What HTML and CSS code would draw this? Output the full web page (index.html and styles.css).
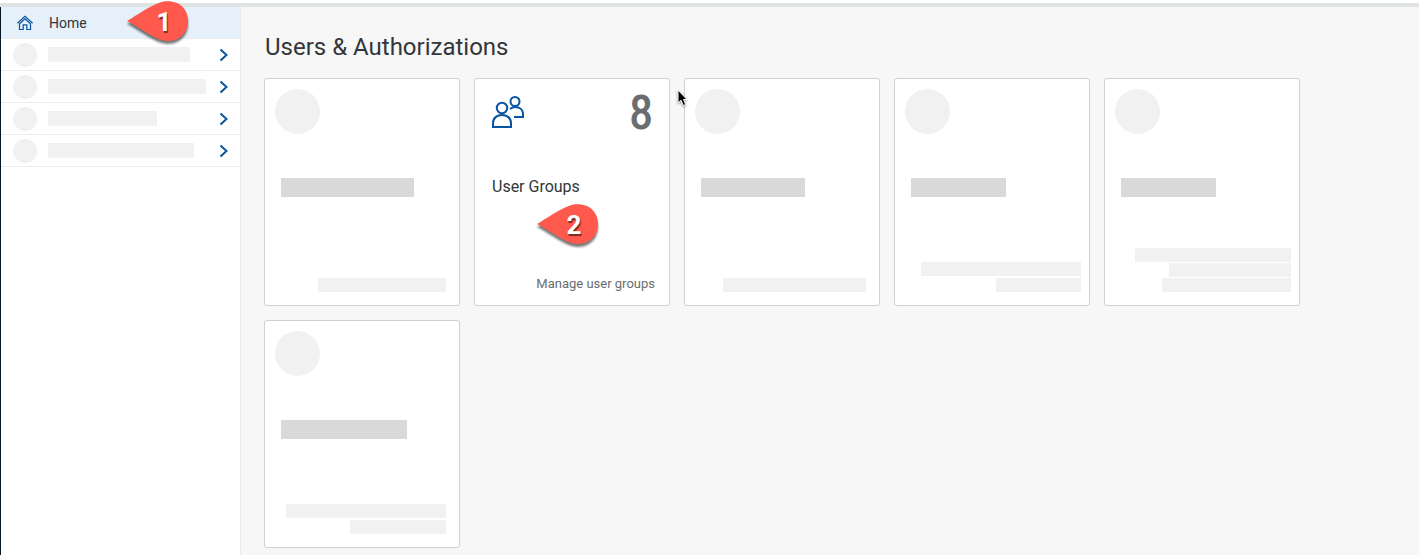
FILE: index.html
```html
<!DOCTYPE html>
<html lang="en">
<head>
<meta charset="utf-8">
<meta name="viewport" content="width=device-width, initial-scale=1">
<title>Users &amp; Authorizations</title>
<link rel="stylesheet" href="styles.css">
</head>
<body>
<svg class="defs" width="0" height="0" aria-hidden="true">
  <symbol id="chevron" viewBox="0 0 10 14"><path d="M1.5 1.5 7.5 7l-6 5.5" fill="none" stroke="#0854a0" stroke-width="2"/></symbol>
  <symbol id="pin" viewBox="0 0 70 50"><path d="M2 21C12 15 25 6 35 2.500C39 1 46 .5 52 3C59 6 63 13 63 21C63 29 59 36 52 39C46 42 39 41 35 39.500C25 36 12 26 2 21Z" fill="#ff594d"/></symbol>
</svg>
<header class="topbar"></header>
<div class="shell">
  <nav class="sidebar" aria-label="Main">
    <a class="row row-home" href="#">
      <svg class="home-icon" viewBox="0 0 16 16" aria-hidden="true"><g fill="none" stroke="#0854a0" stroke-width="1.2"><path d="M.4 8.200 8 1.200l7.600 7"/><path d="M2.500 8.800V14.500H6.200V9.800H9.800V14.500H13.500V8.800L8 3.800Z"/></g></svg>
      <span>Home</span>
      <span class="pin pin-home"><svg viewBox="0 0 70 50" aria-hidden="true"><use href="#pin"/></svg><b>1</b></span>
    </a>
    <a class="row" href="#" aria-label="Section 1"><i class="dot"></i><i class="line" style="width:142px"></i><svg class="chevron"><use href="#chevron"/></svg></a>
    <a class="row" href="#" aria-label="Section 2"><i class="dot"></i><i class="line" style="width:158px"></i><svg class="chevron"><use href="#chevron"/></svg></a>
    <a class="row" href="#" aria-label="Section 3"><i class="dot"></i><i class="line" style="width:109px"></i><svg class="chevron"><use href="#chevron"/></svg></a>
    <a class="row" href="#" aria-label="Section 4"><i class="dot"></i><i class="line" style="width:146px"></i><svg class="chevron"><use href="#chevron"/></svg></a>
  </nav>
  <main class="content">
    <h1>Users &amp; Authorizations</h1>
    <div class="tiles">
      <div class="tile">
        <i class="avatar"></i><i class="title-bar" style="width:133px"></i>
        <div class="foot"><i style="width:128px"></i></div>
      </div>
      <a class="tile tile-groups" href="#">
        <span class="tile-top">
          <svg class="people" viewBox="0 0 32 32" aria-hidden="true"><g fill="none" stroke="#0854a0" stroke-width="2"><circle cx="10" cy="12" r="5.200"/><path d="M1 31V27C1 22 5 19 10 19S19 22 19 27V31Z"/><circle cx="23" cy="5.500" r="4.500"/><path d="M18 13C20 11.500 21.500 11 23 11C28 11 31 14 31 18V21H22"/></g></svg>
          <span class="count">8</span>
        </span>
        <span class="tile-title">User Groups</span>
        <span class="tile-note">Manage user groups</span>
        <span class="pin pin-groups"><svg viewBox="0 0 70 50" aria-hidden="true"><use href="#pin"/></svg><b>2</b></span>
        <svg class="cursor" viewBox="0 0 12 18" aria-hidden="true"><path d="M1 1V14L4 11.300 6.300 16.500 8.700 15.500 6.500 10.500H10Z" fill="#000" stroke="#fff" stroke-width="1"/></svg>
      </a>
      <div class="tile">
        <i class="avatar"></i><i class="title-bar" style="width:104px"></i>
        <div class="foot"><i style="width:143px"></i></div>
      </div>
      <div class="tile tile-wide">
        <i class="avatar"></i><i class="title-bar" style="width:95px"></i>
        <div class="foot"><i style="width:160px"></i><i style="width:85px"></i></div>
      </div>
      <div class="tile tile-wide">
        <i class="avatar"></i><i class="title-bar" style="width:95px"></i>
        <div class="foot foot-dense"><i style="width:156px"></i><i style="width:122px"></i><i style="width:129px"></i></div>
      </div>
      <div class="tile">
        <i class="avatar"></i><i class="title-bar" style="width:126px"></i>
        <div class="foot"><i style="width:160px"></i><i style="width:96px"></i></div>
      </div>
    </div>
  </main>
</div>
</body>
</html>
```
FILE: styles.css
```css
* { box-sizing: border-box; }
body {
  margin: 0;
  min-height: 100vh;
  display: flex;
  flex-direction: column;
  background: #f7f7f7;
  color: #32363a;
  font-family: Roboto, "Liberation Sans", sans-serif;
  font-size: 14px;
}
a { color: inherit; text-decoration: none; }
i, svg { display: block; }
.defs { position: absolute; }
.topbar { height: 7px; border-top: 3px solid #fff; background: #dfe4e3; }
.shell { flex: 1; display: flex; }

.sidebar {
  flex: 0 0 241px;
  background: #fff;
  border-left: 1px solid #04182a;
  border-right: 1px solid #ececec;
}
.row {
  position: relative;
  display: flex;
  align-items: center;
  height: 32px;
  padding: 0 11px 0 12px;
  border-bottom: 1px solid #ececec;
}
.row-home { padding-left: 16px; gap: 16px; background: #e5f0fa; }
.home-icon { width: 16px; height: 16px; }
.dot { width: 24px; height: 24px; margin-right: 11px; border-radius: 50%; background: #f1f1f1; }
.line { height: 15px; background: #f1f1f1; }
.chevron { width: 10px; height: 14px; margin-left: auto; }

.content { flex: 1; min-width: 0; padding: 24px 23px 7px; }
h1 { margin: 0 0 15px; padding-left: 1px; font-size: 24px; line-height: 32px; font-weight: 400; }
.tiles { display: flex; flex-wrap: wrap; gap: 14px; }
.tile {
  position: relative;
  display: flex;
  flex-direction: column;
  width: 196px;
  min-height: 228px;
  padding: 10px 13px 13px 10px;
  background: #fff;
  border: 1px solid #d0d0d0;
  border-radius: 3px;
}
.tile-wide { padding-right: 8px; }
.avatar { width: 45px; height: 45px; border-radius: 50%; background: #f1f1f1; }
.title-bar { height: 19px; margin: 44px 0 0 6px; background: #d9d9d9; }
.foot { display: flex; flex-direction: column; align-items: flex-end; gap: 2px; margin-top: auto; }
.foot-dense { gap: 1px; }
.foot i { height: 14px; background: #f1f1f1; }

.tile-groups { padding: 17px 14px 13px 17px; }
.tile-top { display: flex; justify-content: space-between; height: 32px; padding-right: 2px; }
.people { width: 32px; height: 32px; }
.count {
  color: #6a6d70;
  font-family: "Liberation Sans Narrow", "Roboto Condensed", Roboto, sans-serif;
  font-size: 48px;
  line-height: 34px;
  -webkit-text-stroke: 1px #6a6d70;
}
.tile-title { margin-top: 48px; font-size: 16px; line-height: 22px; }
.tile-note { margin-top: auto; text-align: right; color: #6a6d70; font-size: 13px; line-height: 16px; }

.pin { position: absolute; z-index: 1; width: 70px; height: 50px; }
.pin svg { width: 70px; height: 50px; filter: drop-shadow(0 3px 1px #0008); }
.pin b {
  position: absolute;
  inset: 0 0 auto 31px;
  width: 16px;
  color: #fff;
  font-family: Roboto, sans-serif;
  font-size: 26px;
  line-height: 44px;
  text-align: center;
  text-shadow: 1px 2px 1px #0008;
}
.pin-home { left: 124px; top: -7px; }
.pin-groups { left: 60px; top: 124px; }
.cursor { position: absolute; z-index: 1; left: 202px; top: 10px; width: 12px; height: 18px; filter: drop-shadow(0 1px 1px #0006); }
```
